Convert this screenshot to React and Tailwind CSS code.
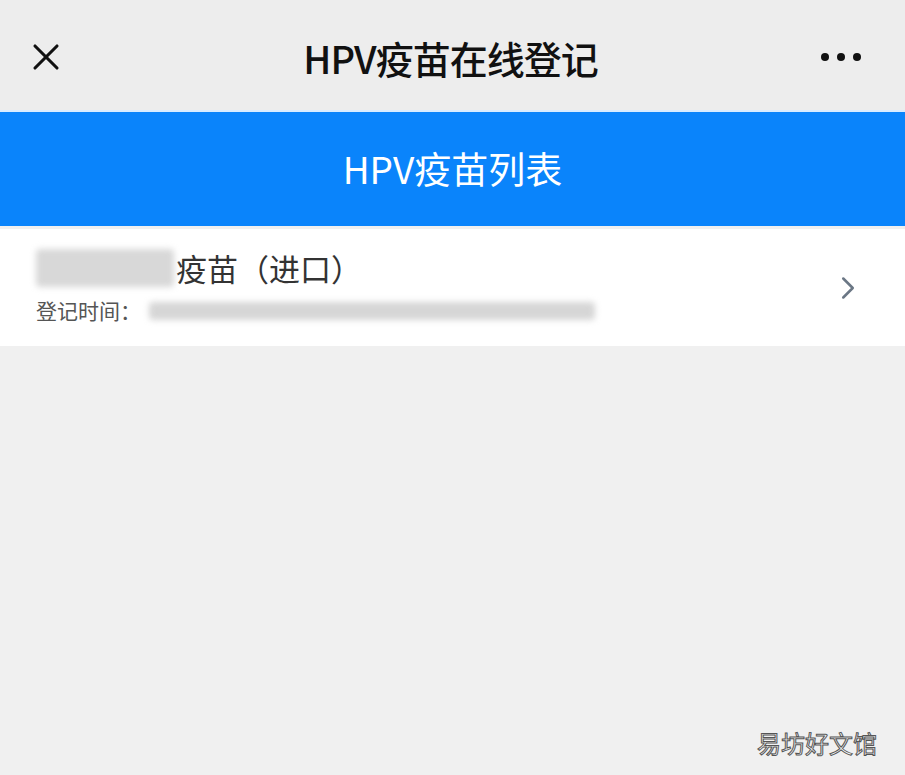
import { X, ChevronRight } from 'lucide-react';

const FONT = { fontFamily: '"Noto Sans CJK SC", "Noto Sans", sans-serif' };

export default function App() {
  return (
    <div className="relative flex h-[775px] w-[905px] flex-col bg-[#f0f0f0]" style={FONT}>
      <div className="flex h-[110px] items-center justify-between bg-[#ededed] pl-[24px] pr-[44px] pt-1">
        <X size={44} strokeWidth={1.7} className="text-[#111]" />
        <div className="pl-3 text-[38px] font-medium tracking-[-1px] text-[#111]">HPV疫苗在线登记</div>
        <div className="flex gap-[8px]">
          <span className="h-[8px] w-[8px] rounded-full bg-[#111]" />
          <span className="h-[8px] w-[8px] rounded-full bg-[#111]" />
          <span className="h-[8px] w-[8px] rounded-full bg-[#111]" />
        </div>
      </div>
      <div className="h-[2px] bg-[#d9ecff]" />
      <div className="flex h-[114px] items-center justify-center bg-[#0a84fb] text-[37px] text-white">
        HPV疫苗列表
      </div>
      <div className="mt-[3px] flex h-[117px] items-center justify-between bg-white pl-9 pr-[38px]">
        <div className="-mt-1 flex flex-col">
          <div className="flex items-center text-[31px] leading-[46px] text-[#333]">
            <span className="mr-0.5 h-[38px] w-[138px] rounded bg-[#d8d8d8] blur-[3px]" />
            疫苗（进口）
          </div>
          <div className="mt-1 flex items-center text-[21px] text-[#555]">
            登记时间：
            <span className="ml-2 h-[18px] w-[446px] rounded bg-[#d6d6d6] blur-[3px]" />
          </div>
        </div>
        <ChevronRight size={38} strokeWidth={1.6} className="text-[#6b7785]" />
      </div>
      <div className="absolute bottom-[14px] right-[28px] text-[24px] text-[#f7f7f7] [-webkit-text-stroke:1px_#555]">
        易坊好文馆
      </div>
    </div>
  );
}
